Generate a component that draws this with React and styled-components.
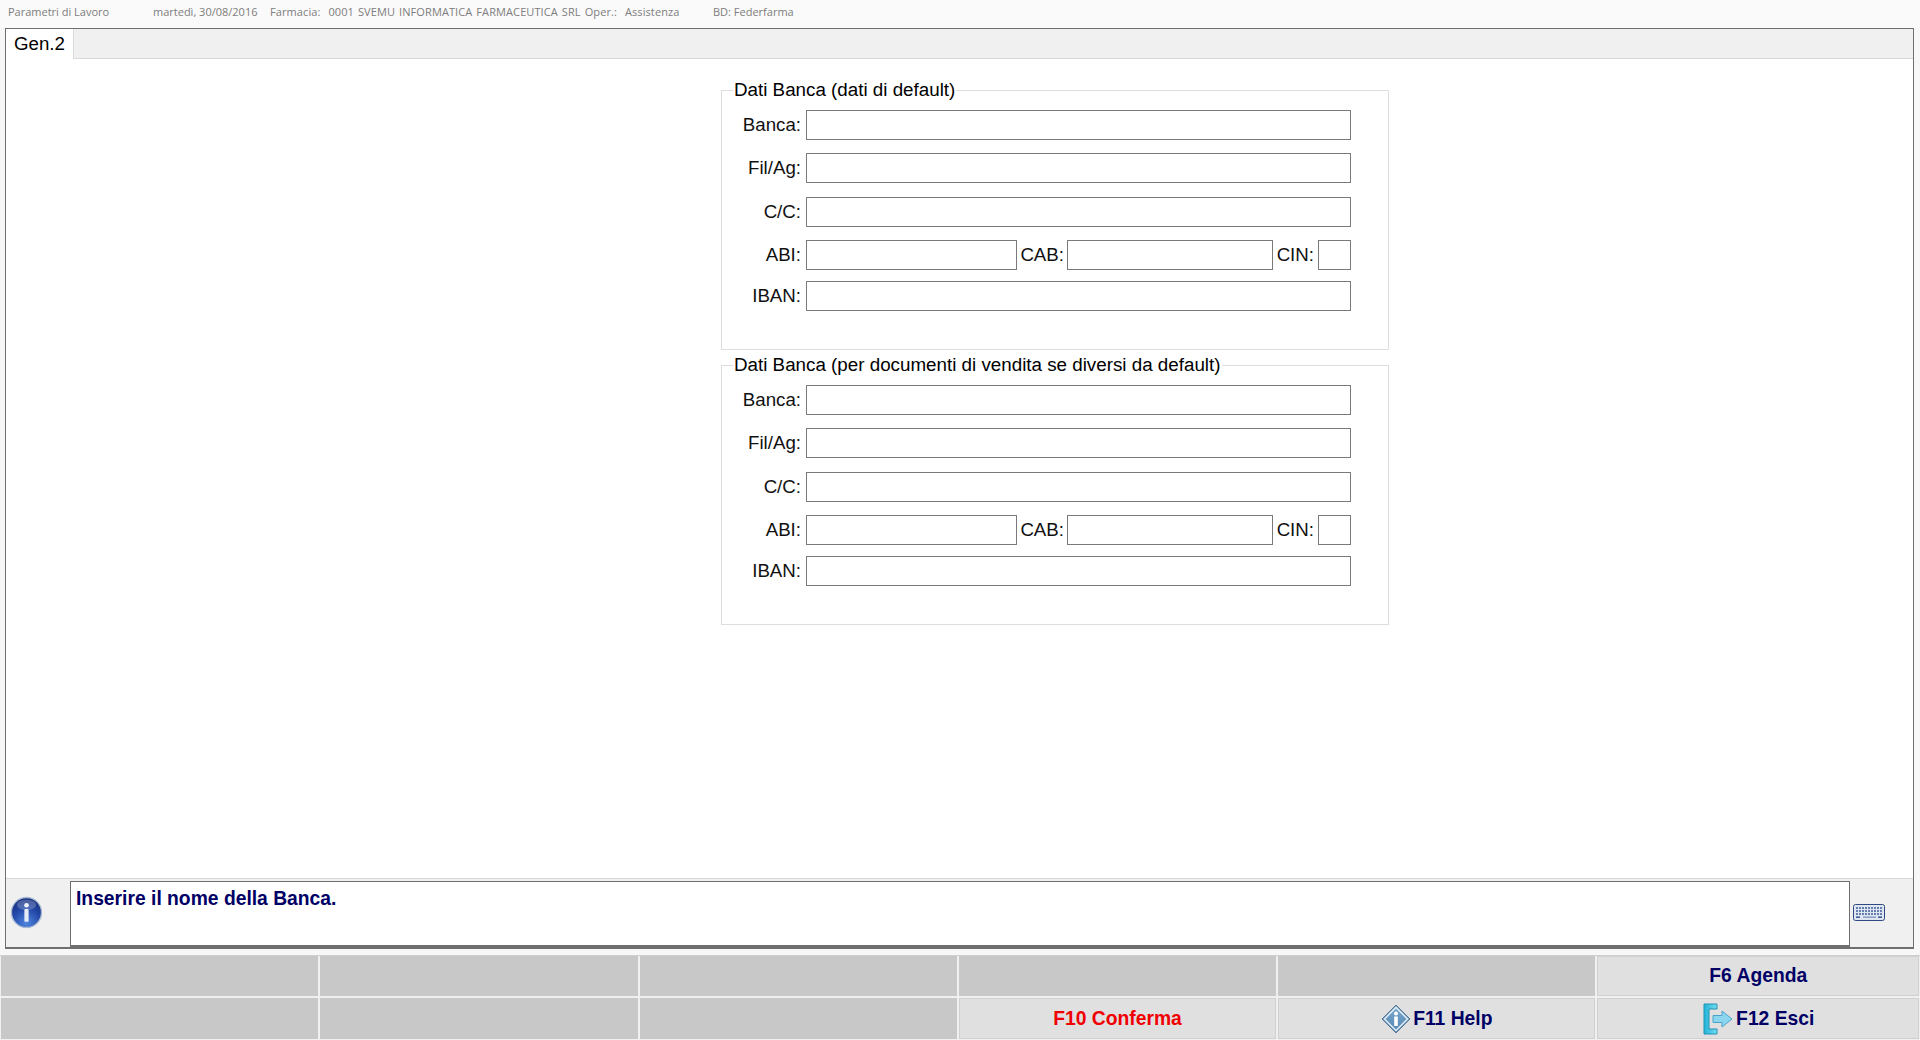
import styled, { createGlobalStyle } from 'styled-components'

const GlobalStyle = createGlobalStyle`
    html, body {
        margin: 0;
        padding: 0;
        background: #f7f7f7;
    }
    * {
        box-sizing: border-box;
    }
`
const Page = styled.div`
    width: 1920px;
    height: 1040px;
    display: flex;
    flex-direction: column;
    overflow: hidden;
    font-family: "Liberation Sans", Arial, sans-serif;
`
const TitleBar = styled.div`
    height: 28px;
    flex: none;
    display: flex;
    align-items: flex-start;
    padding: 4px 0 0 8px;
    background: #fafafa;
`
const TitleText = styled.span`
    width: ${props => props.$width}px;
    flex: none;
    font-family: "Open Sans", sans-serif;
    font-size: 11px;
    line-height: 15px;
    word-spacing: ${props => props.$spread || 0}px;
    letter-spacing: ${props => props.$tracking || 0}px;
    color: #7d7d7d;
    white-space: pre;
`
const Frame = styled.div`
    flex: none;
    height: 921px;
    margin: 0 6px 0 5px;
    display: flex;
    flex-direction: column;
    border: 1px solid #6f6f6f;
    border-bottom-width: 2px;
    background: #f0f0f0;
`
const TabStrip = styled.div`
    height: 30px;
    flex: none;
    display: flex;
    background: #f0f0f0;
    border-bottom: 1px solid #d9d9d9;
`
const Tab = styled.div`
    width: 68px;
    height: 30px;
    padding-top: 5px;
    text-align: center;
    font-size: 18.7px;
    line-height: 20px;
    color: #000;
    background: #fff;
    border-right: 1px solid #d9d9d9;
`
const Content = styled.div`
    flex: 1;
    display: flex;
    flex-direction: column;
    align-items: flex-start;
    padding: 21px 0 0 715px;
    background: #fff;
    border-bottom: 1px solid #d9d9d9;
`
const Group = styled.fieldset`
    width: 668px;
    height: ${props => props.$height}px;
    margin: 0 0 ${props => props.$after}px;
    padding: 0 37px 0 0;
    border: 1px solid #dedede;
    min-inline-size: 0;
`
const GroupTitle = styled.legend`
    margin-left: 11px;
    padding: 0 1px;
    font-size: 18.8px;
    line-height: 20px;
    color: #000;
`
const Row = styled.div`
    height: 30px;
    margin-top: ${props => props.$top}px;
    display: flex;
    align-items: center;
`
const Label = styled.label`
    width: ${props => props.$width}px;
    flex: none;
    padding-right: ${props => props.$pad}px;
    text-align: right;
    font-size: 18.7px;
    color: #111;
`
const Field = styled.input`
    height: 30px;
    width: ${props => props.$width ? `${props.$width}px` : 'auto'};
    flex: ${props => props.$width ? 'none' : '1'};
    min-width: 0;
    padding: 0 4px;
    background: #fff;
    border: 1px solid #7a7a7a;
    border-radius: 0;
    outline: none;
`
const StatusBar = styled.div`
    height: 66px;
    flex: none;
    margin-top: 2px;
    display: flex;
    background: #f0f0f0;
`
const IconSlot = styled.div`
    width: ${props => props.$width}px;
    flex: none;
    display: flex;
    align-items: center;
    padding: 0 0 3px ${props => props.$pad}px;
`
const Message = styled.div`
    flex: 1;
    padding: 5px 5px;
    font-size: 19.3px;
    font-weight: 700;
    line-height: 24px;
    color: #000066;
    background: #fff;
    border: 1px solid #6f6f6f;
    border-bottom-width: 2px;
`
const KeyBar = styled.div`
    flex: 1;
    margin-top: 6px;
    display: grid;
    grid-template-columns: repeat(5, 317.3px) 1fr;
    grid-template-rows: 40px 1fr;
    gap: 2px;
    padding: 0 1px 1px;
    background: #f0f0f0;
    border-top: 1px solid #cfcfcf;
`
const KeyButton = styled.button`
    display: flex;
    align-items: center;
    justify-content: center;
    gap: 2px;
    padding: 0;
    font-family: inherit;
    font-size: 19.3px;
    font-weight: 700;
    color: ${props => props.$danger ? '#f00000' : '#000066'};
    background: ${props => props.$active ? '#e0e0e0' : '#c8c8c8'};
    border: none;
    border-radius: 0;
    box-shadow: ${props => props.$active ? 'inset 0 0 0 1px #d0d0d0' : 'none'};
`

const InfoIcon = () => (
    <svg width="33" height="33" viewBox="0 0 34 34">
        <defs>
            <radialGradient id="infoFill" cx="50%" cy="85%" r="80%">
                <stop offset="0" stopColor="#4f86e0" />
                <stop offset="0.6" stopColor="#2347a8" />
                <stop offset="1" stopColor="#16307f" />
            </radialGradient>
        </defs>
        <circle cx="17" cy="17" r="15.5" fill="url(#infoFill)" stroke="#a9bad3" strokeWidth="1.4" />
        <ellipse cx="17" cy="9" rx="10" ry="5.5" fill="#fff" opacity="0.22" />
        <circle cx="17" cy="9.5" r="2.4" fill="#eef3fb" />
        <rect x="14.8" y="13.5" width="4.4" height="13" rx="0.8" fill="#e4ebf6" />
    </svg>
)

const KeyboardIcon = () => (
    <svg width="32" height="17" viewBox="0 0 32 17">
        <rect x="0.5" y="0.5" width="31" height="16" rx="2" fill="#dfe6f2" stroke="#2f4a80" />
        <g stroke="#3f5f99" strokeWidth="1.6" strokeDasharray="2 1">
            <line x1="3" y1="4" x2="29" y2="4" />
            <line x1="3" y1="7" x2="29" y2="7" />
            <line x1="3" y1="10" x2="29" y2="10" />
        </g>
        <line x1="3" y1="13.2" x2="7" y2="13.2" stroke="#3f5f99" strokeWidth="1.6" />
        <line x1="10" y1="13.2" x2="23" y2="13.2" stroke="#8fa3c6" strokeWidth="1.6" />
        <line x1="25" y1="13.2" x2="29" y2="13.2" stroke="#3f5f99" strokeWidth="1.6" />
    </svg>
)

const HelpIcon = () => (
    <svg width="30" height="30" viewBox="0 0 30 30">
        <defs>
            <linearGradient id="helpFill" x1="0" y1="0" x2="0" y2="1">
                <stop offset="0" stopColor="#7fabd0" />
                <stop offset="1" stopColor="#4f84b3" />
            </linearGradient>
        </defs>
        <path d="M15 1 L29 15 L15 29 L1 15 Z" fill="url(#helpFill)" stroke="#5d7690" strokeWidth="1" />
        <path d="M15 3.5 L26.5 15 L15 26.5 L3.5 15 Z" fill="none" stroke="#e6eff6" strokeWidth="1.4" />
        <circle cx="15" cy="9.5" r="2" fill="#fff" />
        <rect x="13.2" y="12.5" width="3.6" height="9.5" fill="#fff" />
    </svg>
)

const ExitIcon = () => (
    <svg width="32" height="32" viewBox="0 0 32 32">
        <defs>
            <linearGradient id="exitFrame" x1="0" y1="0" x2="1" y2="0">
                <stop offset="0" stopColor="#1fb4d8" />
                <stop offset="1" stopColor="#74dcef" />
            </linearGradient>
        </defs>
        <path d="M2 1 H15 V6 H7 V26 H15 V31 H2 Z" fill="url(#exitFrame)" stroke="#2592b4" strokeWidth="1" />
        <path d="M11 12.5 H20 V8 L30 16 L20 24 V19.5 H11 Z" fill="#8bd6ee" stroke="#4aa3c9" strokeWidth="1" />
    </svg>
)

const BankGroup = ({ title, height, after }) => (
    <Group $height={height} $after={after}>
        <GroupTitle>{title}</GroupTitle>
        <Row $top={10}>
            <Label $width={84} $pad={5}>Banca:</Label>
            <Field />
        </Row>
        <Row $top={13}>
            <Label $width={84} $pad={5}>Fil/Ag:</Label>
            <Field />
        </Row>
        <Row $top={14}>
            <Label $width={84} $pad={5}>C/C:</Label>
            <Field />
        </Row>
        <Row $top={13}>
            <Label $width={84} $pad={5}>ABI:</Label>
            <Field $width={211} />
            <Label $width={50} $pad={3}>CAB:</Label>
            <Field $width={206} />
            <Label $width={45} $pad={4}>CIN:</Label>
            <Field />
        </Row>
        <Row $top={11}>
            <Label $width={84} $pad={5}>IBAN:</Label>
            <Field />
        </Row>
    </Group>
)

export default function App() {
    return (
        <Page>
            <GlobalStyle />
            <TitleBar>
                <TitleText $width={145}>Parametri di Lavoro</TitleText>
                <TitleText $width={117}>martedì, 30/08/2016</TitleText>
                <TitleText $width={443} $spread={1} $tracking={0.1}>Farmacia:  0001 SVEMU INFORMATICA FARMACEUTICA SRL Oper.:  Assistenza</TitleText>
                <TitleText $width={100}>BD: Federfarma</TitleText>
            </TitleBar>
            <Frame>
                <TabStrip>
                    <Tab>Gen.2</Tab>
                </TabStrip>
                <Content>
                    <BankGroup title="Dati Banca (dati di default)" height={270} after={5} />
                    <BankGroup title="Dati Banca (per documenti di vendita se diversi da default)" height={270} after={0} />
                </Content>
                <StatusBar>
                    <IconSlot $width={64} $pad={4}><InfoIcon /></IconSlot>
                    <Message>Inserire il nome della Banca.</Message>
                    <IconSlot $width={63} $pad={3}><KeyboardIcon /></IconSlot>
                </StatusBar>
            </Frame>
            <KeyBar>
                <KeyButton />
                <KeyButton />
                <KeyButton />
                <KeyButton />
                <KeyButton />
                <KeyButton $active>F6 Agenda</KeyButton>
                <KeyButton />
                <KeyButton />
                <KeyButton />
                <KeyButton $active $danger>F10 Conferma</KeyButton>
                <KeyButton $active><HelpIcon />F11 Help</KeyButton>
                <KeyButton $active><ExitIcon />F12 Esci</KeyButton>
            </KeyBar>
        </Page>
    )
}
